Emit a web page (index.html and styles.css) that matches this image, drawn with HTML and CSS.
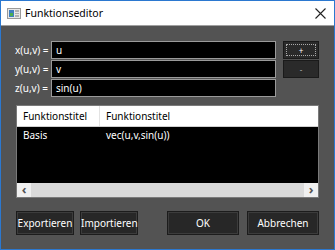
FILE: index.html
```html
<!DOCTYPE html>
<html>
  <head>
    <title>Funktionseditor</title>
    <link rel="stylesheet" href="styles.css">
  </head>
  <body>
    <div class="window">
      <div class="titlebar">
        <svg class="app-icon" width="14" height="11" viewBox="0 0 14 11">
          <rect x="0.5" y="0.5" width="13" height="10" fill="#e8e8e8" stroke="#9a9a9a"/>
          <rect x="2" y="2" width="5" height="7" fill="#3f7fbf"/>
          <rect x="3" y="5" width="3" height="3" fill="#4caf50"/>
          <rect x="8" y="2" width="4" height="2" fill="#b0b0b0"/>
          <rect x="8" y="5" width="4" height="1" fill="#b0b0b0"/>
          <rect x="8" y="7" width="4" height="2" fill="#b0b0b0"/>
        </svg>
        <span class="title">Funktionseditor</span>
        <svg class="close" width="11" height="11" viewBox="0 0 11 11">
          <path d="M0.5 0.5 L10.5 10.5 M10.5 0.5 L0.5 10.5" stroke="#222" stroke-width="1.1"/>
        </svg>
      </div>

      <div class="content">
        <div class="form">
          <label>x(u,v) =</label>
          <div class="field">u</div>
          <div class="btn-small"><span class="focus">+</span></div>

          <label>y(u,v) =</label>
          <div class="field">v</div>
          <div class="btn-small minus">-</div>

          <label>z(u,v) =</label>
          <div class="field">sin(u)</div>
          <div></div>
        </div>

        <div class="list">
          <div class="list-head">
            <div class="col col-1">Funktionstitel</div>
            <div class="col">Funktionstitel</div>
          </div>
          <div class="list-body">
            <div class="row">
              <div class="col col-1">Basis</div>
              <div class="col">vec(u,v,sin(u))</div>
            </div>
          </div>
          <div class="hscroll">
            <div class="arrow">&#8249;</div>
            <div class="track"></div>
            <div class="arrow">&#8250;</div>
          </div>
        </div>

        <div class="actions">
          <button class="btn btn-export">Exportieren</button>
          <button class="btn btn-import">Importieren</button>
          <div class="spacer"></div>
          <button class="btn btn-ok">OK</button>
          <button class="btn btn-cancel">Abbrechen</button>
        </div>
      </div>
    </div>
  </body>
</html>
```

FILE: styles.css
```css
body {
  margin: 0;
  font-family: "Noto Sans", "Open Sans", sans-serif;
  font-size: 10px;
}
.window {
  width: 335px;
  height: 250px;
  box-sizing: border-box;
  border: 1px solid #2b78d0;
  background-color: #535353;
  display: flex;
  flex-direction: column;
}
.titlebar {
  height: 24px;
  background-color: #fff;
  border-bottom: 1px solid #a0a0a0;
  display: flex;
  align-items: center;
  padding: 0 8px 0 6px;
}
.app-icon {
  margin-right: 4px;
}
.title {
  flex: 1;
  font-size: 10.5px;
  color: #000;
}
.content {
  padding: 15px 14px 0 14px;
  color: #fff;
}
.form {
  display: grid;
  grid-template-columns: 29px 225px 36px;
  grid-auto-rows: 18px;
  column-gap: 7px;
  row-gap: 1px;
}
.form label {
  line-height: 18px;
  white-space: nowrap;
}
.field {
  background-color: #000;
  border: 1px solid #9a9a9a;
  line-height: 16px;
  padding-left: 4px;
}
.btn-small {
  background-color: #2a2a2a;
  border: 1px solid #1a1a1a;
  color: #ddd;
  font-size: 8px;
  padding: 2px;
  display: flex;
  align-items: center;
  justify-content: center;
}
.btn-small.minus {
  color: #aaa;
}
.focus {
  align-self: stretch;
  flex: 1;
  border: 1px dotted #aaa;
  display: flex;
  align-items: center;
  justify-content: center;
  color: #fff;
}
.list {
  margin: 8px 0 0 1px;
  width: 303px;
  height: 93px;
  box-sizing: border-box;
  border: 1px solid #7a7a7a;
  background-color: #000;
  display: flex;
  flex-direction: column;
}
.list-head {
  display: flex;
  background-color: #fff;
  color: #000;
  height: 20px;
  border-bottom: 1px solid #d0d0d0;
}
.list-head .col-1 {
  border-right: 1px solid #e3e3e3;
}
.col {
  line-height: 20px;
  padding-left: 6px;
  white-space: nowrap;
}
.col-1 {
  width: 76px;
}
.list-body {
  flex: 1;
}
.row {
  display: flex;
  height: 19px;
}
.row .col {
  line-height: 17px;
}
.row .col-1 {
  width: 77px;
}
.hscroll {
  height: 14px;
  display: flex;
  background-color: #dadada;
}
.arrow {
  width: 14px;
  background-color: #f0f0f0;
  color: #555;
  font-size: 13px;
  font-weight: bold;
  line-height: 12px;
  text-align: center;
}
.track {
  flex: 1;
}
.actions {
  display: flex;
  margin: 13px 0 0 1px;
  width: 303px;
}
.btn {
  height: 24px;
  background-color: #272727;
  border: 1px solid #1c1c1c;
  box-shadow: inset 0 0 0 1px #3c3c3c;
  color: #fff;
  font-family: "Noto Sans", "Open Sans", sans-serif;
  font-size: 10px;
  padding: 0;
  margin: 0;
}
.btn-export {
  width: 58px;
}
.btn-import {
  width: 58px;
  margin-left: 6px;
}
.spacer {
  flex: 1;
}
.btn-ok {
  width: 72px;
}
.btn-cancel {
  width: 72px;
  margin-left: 8px;
}
```
